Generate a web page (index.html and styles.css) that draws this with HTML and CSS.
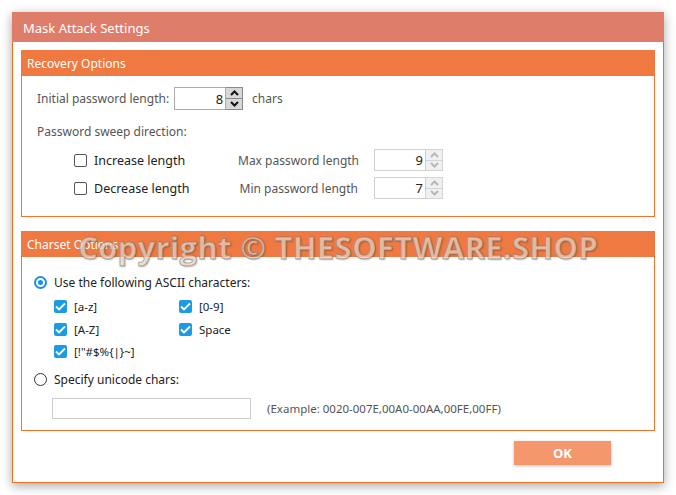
FILE: index.html
```html
<!DOCTYPE html>
<html>
<head>
<meta charset="utf-8">
<title>Mask Attack Settings</title>
<link rel="stylesheet" href="styles.css">
</head>
<body>
<div class="dialog">
  <div class="titlebar">Mask Attack Settings</div>
  <div class="content">
    <section class="group recovery">
      <div class="group-head">Recovery Options</div>
      <div class="group-body">
        <div class="row-initial">
          <span class="lbl">Initial password length:</span>
          <span class="spin active">
            <span class="spin-val">8</span>
            <span class="spin-btns">
              <span class="sb"><svg width="9" height="6" viewBox="0 0 9 6"><path d="M1 5 L4.5 1.5 L8 5" fill="none" stroke="#111" stroke-width="2"/></svg></span>
              <span class="sb"><svg width="9" height="6" viewBox="0 0 9 6"><path d="M1 1 L4.5 4.5 L8 1" fill="none" stroke="#111" stroke-width="2"/></svg></span>
            </span>
          </span>
          <span class="lbl unit">chars</span>
        </div>
        <div class="lbl sweep-label">Password sweep direction:</div>
        <div class="sweep-grid">
          <label class="check"><span class="box"></span><span class="ctext">Increase length</span></label>
          <span class="lbl right">Max password length</span>
          <span class="spin disabled">
            <span class="spin-val">9</span>
            <span class="spin-btns">
              <span class="sb"><svg width="9" height="6" viewBox="0 0 9 6"><path d="M1 5 L4.5 1.5 L8 5" fill="none" stroke="#b8b8b8" stroke-width="2"/></svg></span>
              <span class="sb"><svg width="9" height="6" viewBox="0 0 9 6"><path d="M1 1 L4.5 4.5 L8 1" fill="none" stroke="#b8b8b8" stroke-width="2"/></svg></span>
            </span>
          </span>
          <label class="check"><span class="box"></span><span class="ctext">Decrease length</span></label>
          <span class="lbl right">Min password length</span>
          <span class="spin disabled">
            <span class="spin-val">7</span>
            <span class="spin-btns">
              <span class="sb"><svg width="9" height="6" viewBox="0 0 9 6"><path d="M1 5 L4.5 1.5 L8 5" fill="none" stroke="#b8b8b8" stroke-width="2"/></svg></span>
              <span class="sb"><svg width="9" height="6" viewBox="0 0 9 6"><path d="M1 1 L4.5 4.5 L8 1" fill="none" stroke="#b8b8b8" stroke-width="2"/></svg></span>
            </span>
          </span>
        </div>
      </div>
    </section>

    <section class="group charset">
      <div class="group-head">Charset Options</div>
      <div class="group-body">
        <label class="radio"><span class="ring on"></span><span class="rtext">Use the following ASCII characters:</span></label>
        <div class="char-grid">
          <label class="check"><span class="box on"><svg width="11" height="9" viewBox="0 0 11 9"><path d="M1 4.5 L4 7.5 L10 1.5" fill="none" stroke="#fff" stroke-width="1.8"/></svg></span><span class="ctext">[a-z]</span></label>
          <label class="check"><span class="box on"><svg width="11" height="9" viewBox="0 0 11 9"><path d="M1 4.5 L4 7.5 L10 1.5" fill="none" stroke="#fff" stroke-width="1.8"/></svg></span><span class="ctext">[0-9]</span></label>
          <label class="check"><span class="box on"><svg width="11" height="9" viewBox="0 0 11 9"><path d="M1 4.5 L4 7.5 L10 1.5" fill="none" stroke="#fff" stroke-width="1.8"/></svg></span><span class="ctext">[A-Z]</span></label>
          <label class="check"><span class="box on"><svg width="11" height="9" viewBox="0 0 11 9"><path d="M1 4.5 L4 7.5 L10 1.5" fill="none" stroke="#fff" stroke-width="1.8"/></svg></span><span class="ctext">Space</span></label>
          <label class="check"><span class="box on"><svg width="11" height="9" viewBox="0 0 11 9"><path d="M1 4.5 L4 7.5 L10 1.5" fill="none" stroke="#fff" stroke-width="1.8"/></svg></span><span class="ctext">[!"#$%{|}~]</span></label>
        </div>
        <label class="radio second"><span class="ring"></span><span class="rtext">Specify unicode chars:</span></label>
        <div class="unicode-row">
          <span class="textbox"></span>
          <span class="example">(Example: 0020-007E,00A0-00AA,00FE,00FF)</span>
        </div>
      </div>
    </section>
  </div>
  <div class="footer"><button class="ok">OK</button></div>
</div>
<div class="watermark">Copyright © THESOFTWARE.SHOP</div>
</body>
</html>
```

FILE: styles.css
```css
html, body {
  margin: 0;
  padding: 0;
  background: #ffffff;
}
body {
  width: 676px;
  height: 495px;
  position: relative;
  font-family: "Noto Sans", "Open Sans", "DejaVu Sans", sans-serif;
  font-size: 12px;
  color: #333;
  overflow: hidden;
}
.dialog {
  margin: 12px 0 0 12px;
  width: 652px;
  height: 471px;
  box-sizing: border-box;
  border: 1px solid #f36d22;
  border-top: none;
  background: #fff;
  box-shadow: 0 3px 10px rgba(0,0,0,0.35);
  display: flex;
  flex-direction: column;
}
.titlebar {
  height: 30px;
  margin: 0 -1px;
  background: #df7d6b;
  color: #fff;
  font-size: 13px;
  line-height: 32px;
  padding-left: 11px;
}
.content {
  padding: 8px 8px 0 8px;
  display: flex;
  flex-direction: column;
  gap: 14px;
}
.group {
  border: 1px solid #f2732d;
  border-top: none;
}
.group-head {
  height: 26px;
  margin: 0 -1px;
  background: #f07942;
  color: #fff;
  font-size: 12px;
  line-height: 27px;
  padding-left: 6px;
}
.recovery { height: 167px; box-sizing: border-box; }
.charset { height: 200px; box-sizing: border-box; }

.lbl { color: #555; white-space: nowrap; }
.recovery .group-body { padding: 11px 0 0 15px; }
.row-initial {
  display: flex;
  align-items: center;
  height: 23px;
}
.row-initial .spin { margin-left: 5px; }
.row-initial .unit { margin-left: 9px; }
.sweep-label { margin-top: 14px; line-height: 16px; }
.sweep-grid {
  margin-top: 9px;
  padding-left: 37px;
  display: grid;
  grid-template-columns: 148px 120px 69px;
  grid-auto-rows: 22px;
  row-gap: 6px;
  column-gap: 16px;
  align-items: center;
}
.right { text-align: right; }

.spin {
  display: inline-flex;
  height: 23px;
}
.sweep-grid .spin { height: 22px; }
.spin-val {
  width: 52px;
  box-sizing: border-box;
  border: 1px solid #ababab;
  text-align: right;
  padding-right: 2px;
  font-size: 13px;
  color: #222;
  display: flex;
  align-items: center;
  justify-content: flex-end;
}
.spin-btns {
  width: 17px;
  display: flex;
  flex-direction: column;
  box-sizing: border-box;
  border: 1px solid #8a8a8a;
  border-left: none;
}
.sb {
  flex: 1;
  display: flex;
  align-items: center;
  justify-content: center;
  background: #d8d8d8;
}
.sb + .sb { border-top: 1px solid #8a8a8a; }
.disabled .spin-val { border-color: #cfcfcf; }
.disabled .spin-btns { border-color: #d4d4d4; }
.disabled .sb { background: #f0f0f0; }
.disabled .sb + .sb { border-top-color: #d4d4d4; }

.check {
  display: flex;
  align-items: center;
  white-space: nowrap;
}
.box {
  width: 13px;
  height: 13px;
  box-sizing: border-box;
  border: 1.5px solid #555;
  border-radius: 2px;
  display: flex;
  align-items: center;
  justify-content: center;
  flex: none;
}
.box.on {
  border: none;
  background: #1b9be6;
}
.recovery .ctext { margin-left: 7px; color: #222; font-size: 12.5px; }
.charset .ctext { margin-left: 7px; color: #222; font-size: 11.5px; }

.charset .group-body { padding: 18px 0 0 12px; }
.radio {
  display: flex;
  align-items: center;
  height: 14px;
}
.ring {
  width: 13px;
  height: 13px;
  box-sizing: border-box;
  border-radius: 50%;
  border: 1px solid #333;
  flex: none;
  position: relative;
}
.ring.on {
  border: 2px solid #1b8fe0;
}
.ring.on::after {
  content: "";
  position: absolute;
  left: 2px;
  top: 2px;
  width: 5px;
  height: 5px;
  border-radius: 50%;
  background: #1b8fe0;
}
.rtext { margin-left: 7px; color: #222; font-size: 12px; }
.char-grid {
  margin-top: 10px;
  padding-left: 20px;
  display: grid;
  grid-template-columns: 125px 120px;
  grid-auto-rows: 15px;
  row-gap: 7.5px;
}
.radio.second { margin-top: 13px; }
.unicode-row {
  margin-top: 12px;
  padding-left: 18px;
  display: flex;
  align-items: center;
}
.textbox {
  width: 199px;
  height: 21px;
  box-sizing: border-box;
  border: 1px solid #cccccc;
}
.example {
  margin-left: 16px;
  color: #555;
  font-size: 11.5px;
}

.footer {
  display: flex;
  justify-content: flex-end;
  padding: 10px 52px 0 0;
}
.ok {
  width: 97px;
  height: 24px;
  border: none;
  background: #f5976c;
  color: #fff;
  font-family: "Open Sans", "Noto Sans", sans-serif;
  font-weight: bold;
  font-size: 13px;
  box-shadow: 0 1px 3px rgba(0,0,0,0.25);
  padding: 0;
}

.watermark {
  position: absolute;
  left: 78px;
  top: 226px;
  font-family: "Open Sans", "Noto Sans", sans-serif;
  font-weight: bold;
  font-size: 31px;
  letter-spacing: 0.3px;
  line-height: 42px;
  white-space: nowrap;
  color: rgba(255, 225, 205, 0.7);
  -webkit-text-stroke: 1px rgba(120, 120, 120, 0.6);
  text-shadow: 1px 1px 2px rgba(0,0,0,0.25);
}
```
